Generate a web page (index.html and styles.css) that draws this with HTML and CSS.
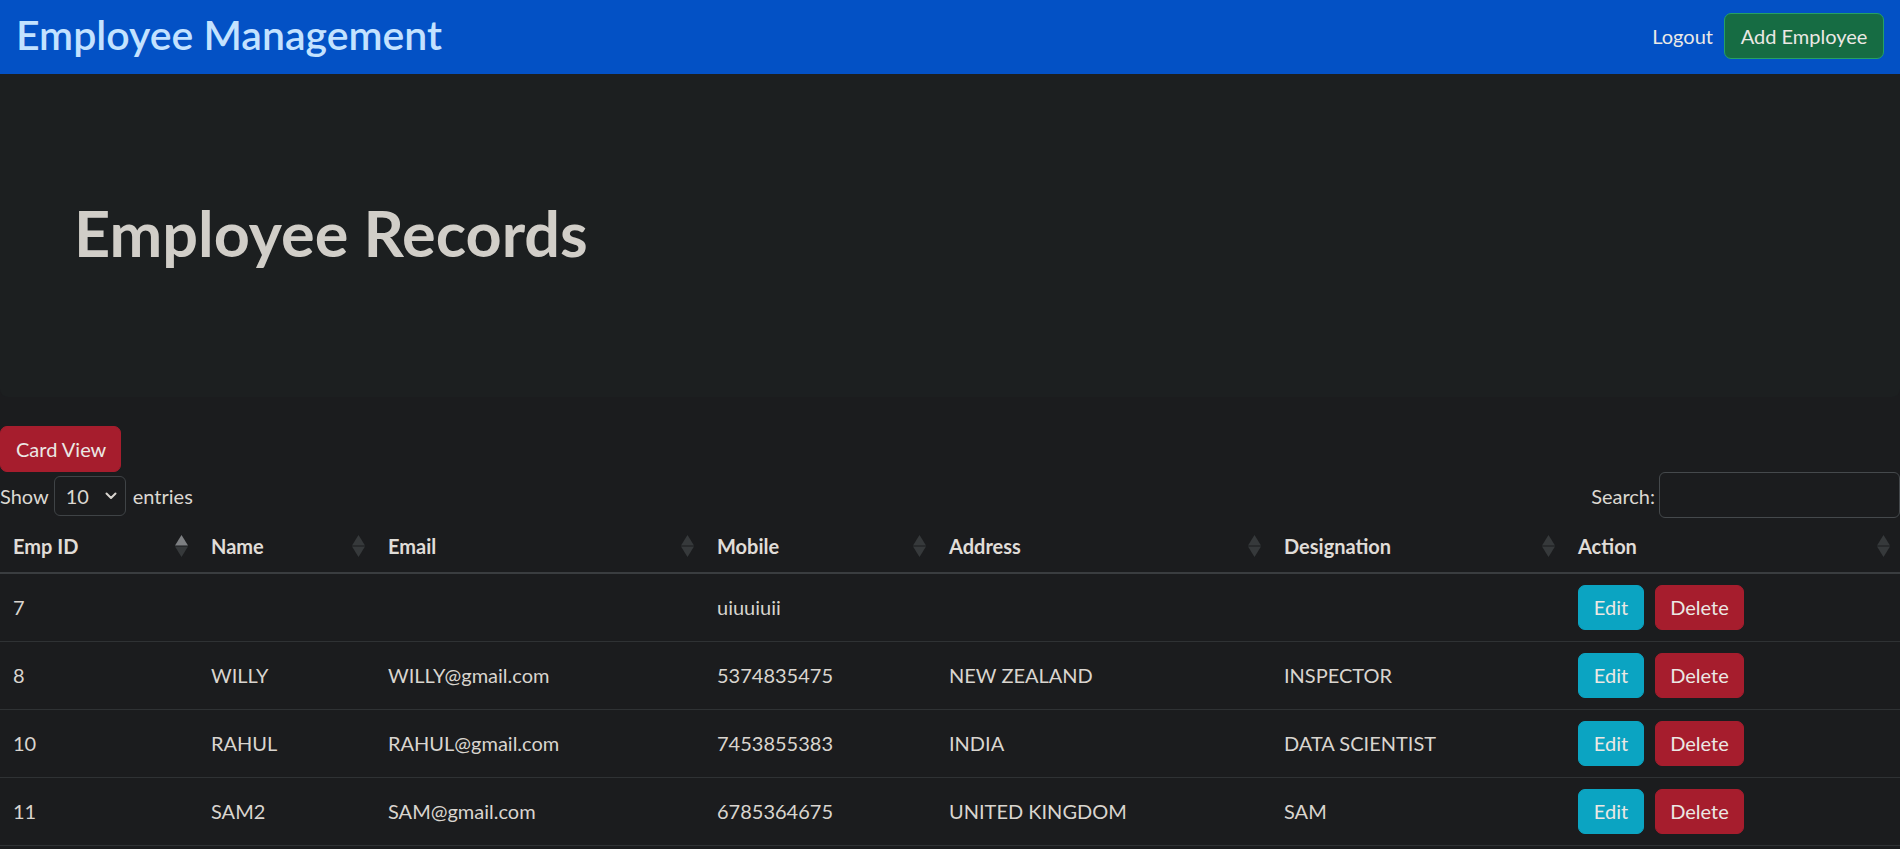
FILE: index.html
```html
<!DOCTYPE html>
<html lang="en">
<head>
<meta charset="utf-8">
<title>Employee Management</title>
<link rel="stylesheet" href="styles.css">
</head>
<body>
<nav class="navbar">
  <a class="brand" href="#">Employee Management</a>
  <div class="nav-right">
    <a class="nav-link" href="#">Logout</a>
    <button class="btn btn-success">Add Employee</button>
  </div>
</nav>

<section class="hero">
  <h1>Employee Records</h1>
</section>

<main class="content">
  <button class="btn btn-danger btn-card">Card View</button>

  <div class="dt-top">
    <label class="dt-length">Show
      <span class="select-wrap">
        <select class="dt-select"><option>10</option><option>25</option><option>50</option></select>
        <svg class="chev" width="12" height="8" viewBox="0 0 12 8"><path d="M1.5 1.5 L6 6 L10.5 1.5" fill="none" stroke="#d8d4cf" stroke-width="2" stroke-linecap="round" stroke-linejoin="round"/></svg>
      </span>
      entries</label>
    <label class="dt-search">Search:<input type="search" class="dt-input"></label>
  </div>

  <table class="dt-table">
    <colgroup>
      <col class="c-id"><col class="c-name"><col class="c-email"><col class="c-mobile"><col class="c-addr"><col class="c-desig"><col class="c-action">
    </colgroup>
    <thead>
      <tr>
        <th><div class="th-in"><span>Emp ID</span><svg class="sort" width="13" height="22" viewBox="0 0 13 22"><polygon class="up active" points="6.5,0 13,10.5 0,10.5"/><polygon class="down" points="0,11.5 13,11.5 6.5,22"/></svg></div></th>
        <th><div class="th-in"><span>Name</span><svg class="sort" width="13" height="22" viewBox="0 0 13 22"><polygon class="up" points="6.5,0 13,10.5 0,10.5"/><polygon class="down" points="0,11.5 13,11.5 6.5,22"/></svg></div></th>
        <th><div class="th-in"><span>Email</span><svg class="sort" width="13" height="22" viewBox="0 0 13 22"><polygon class="up" points="6.5,0 13,10.5 0,10.5"/><polygon class="down" points="0,11.5 13,11.5 6.5,22"/></svg></div></th>
        <th><div class="th-in"><span>Mobile</span><svg class="sort" width="13" height="22" viewBox="0 0 13 22"><polygon class="up" points="6.5,0 13,10.5 0,10.5"/><polygon class="down" points="0,11.5 13,11.5 6.5,22"/></svg></div></th>
        <th><div class="th-in"><span>Address</span><svg class="sort" width="13" height="22" viewBox="0 0 13 22"><polygon class="up" points="6.5,0 13,10.5 0,10.5"/><polygon class="down" points="0,11.5 13,11.5 6.5,22"/></svg></div></th>
        <th><div class="th-in"><span>Designation</span><svg class="sort" width="13" height="22" viewBox="0 0 13 22"><polygon class="up" points="6.5,0 13,10.5 0,10.5"/><polygon class="down" points="0,11.5 13,11.5 6.5,22"/></svg></div></th>
        <th><div class="th-in"><span>Action</span><svg class="sort" width="13" height="22" viewBox="0 0 13 22"><polygon class="up" points="6.5,0 13,10.5 0,10.5"/><polygon class="down" points="0,11.5 13,11.5 6.5,22"/></svg></div></th>
      </tr>
    </thead>
    <tbody>
      <tr>
        <td>7</td><td></td><td></td><td>uiuuiuii</td><td></td><td></td>
        <td><div class="actions"><button class="btn btn-info">Edit</button><button class="btn btn-danger">Delete</button></div></td>
      </tr>
      <tr>
        <td>8</td><td>WILLY</td><td>WILLY@gmail.com</td><td>5374835475</td><td>NEW ZEALAND</td><td>INSPECTOR</td>
        <td><div class="actions"><button class="btn btn-info">Edit</button><button class="btn btn-danger">Delete</button></div></td>
      </tr>
      <tr>
        <td>10</td><td>RAHUL</td><td>RAHUL@gmail.com</td><td>7453855383</td><td>INDIA</td><td>DATA SCIENTIST</td>
        <td><div class="actions"><button class="btn btn-info">Edit</button><button class="btn btn-danger">Delete</button></div></td>
      </tr>
      <tr>
        <td>11</td><td>SAM2</td><td>SAM@gmail.com</td><td>6785364675</td><td>UNITED KINGDOM</td><td>SAM</td>
        <td><div class="actions"><button class="btn btn-info">Edit</button><button class="btn btn-danger">Delete</button></div></td>
      </tr>
    </tbody>
  </table>
</main>
</body>
</html>
```

FILE: styles.css
```css
* { box-sizing: border-box; }

html, body {
  margin: 0;
  padding: 0;
  background: #1b1c1e;
  color: #dcd8d2;
  font-family: "Lato", "Liberation Sans", sans-serif;
  font-size: 20px;
  line-height: 1.5;
}

/* Navbar */
.navbar {
  height: 74px;
  background: #0351c5;
  display: flex;
  align-items: center;
  justify-content: space-between;
  padding: 0 16px 0 16px;
}
.brand {
  font-size: 41px;
  font-weight: 600;
  color: #c3e2ff;
  text-decoration: none;
  line-height: 1.2;
  margin-top: -4px;
}
.nav-right {
  display: flex;
  align-items: center;
  gap: 11px;
  margin-top: -2px;
}
.nav-link {
  color: #ebe9e6;
  text-decoration: none;
  font-size: 20px;
}

/* Buttons */
.btn {
  font-family: inherit;
  font-size: 20px;
  line-height: 1.5;
  color: #ebe8e4;
  border: 1px solid transparent;
  border-radius: 7px;
  padding: 0 15px;
  height: 46px;
  white-space: nowrap;
  cursor: pointer;
}
.btn-success {
  background: #166c43;
  border-color: #25a065;
  width: 160px;
}
.btn-danger {
  background: #a61d2d;
  border-color: #a61d2d;
}
.btn-info {
  background: #0ba4c2;
  border-color: #0ba4c2;
}

/* Hero */
.hero {
  height: 323px;
  background: #1c1f20;
  border-radius: 0 0 8px 8px;
  display: flex;
  align-items: center;
  padding-left: 74px;
}
.hero h1 {
  margin: -6px 0 0 0;
  font-size: 63px;
  font-weight: 700;
  color: #d1cec8;
  line-height: 1.2;
}

/* Content */
.content {
  padding-top: 29px;
}
.btn-card {
  height: 46px;
  display: block;
  padding: 0 15px;
  width: 121px;
}

.dt-top {
  height: 47px;
  display: flex;
  align-items: center;
  justify-content: space-between;
}
.dt-length {
  display: flex;
  align-items: center;
}
.select-wrap {
  position: relative;
  display: inline-block;
  margin: 0 7px 0 5px;
}
.dt-select {
  -webkit-appearance: none;
  appearance: none;
  width: 72px;
  height: 40px;
  background: #1b1c1e;
  color: #dcd8d2;
  border: 1px solid #3f4346;
  border-radius: 6px;
  font-family: inherit;
  font-size: 20px;
  padding: 0 0 0 11px;
}
.chev {
  position: absolute;
  right: 9px;
  top: 16px;
  pointer-events: none;
}
.dt-search {
  display: flex;
  align-items: center;
  gap: 4px;
}
.dt-input {
  width: 241px;
  height: 46px;
  background: #1b1c1e;
  border: 1px solid #45494c;
  border-radius: 6px;
  color: #dcd8d2;
  margin-top: -2px;
}

/* Table */
.dt-table {
  width: 100%;
  table-layout: fixed;
  border-collapse: collapse;
}
.c-id { width: 198px; }
.c-name { width: 177px; }
.c-email { width: 329px; }
.c-mobile { width: 232px; }
.c-addr { width: 335px; }
.c-desig { width: 294px; }
.c-action { width: 335px; }

.dt-table th {
  text-align: left;
  font-weight: 700;
  color: #e0ddd8;
  padding: 12px 10px 11px 13px;
  border-bottom: 2px solid #3a3d40;
  height: 54px;
}
.th-in {
  display: flex;
  align-items: center;
  justify-content: space-between;
}
.sort polygon { fill: #36393b; }
.sort polygon.active { fill: #7d7f82; }

.dt-table td {
  padding: 0 13px;
  height: 68px;
  border-bottom: 1px solid #2f3234;
  color: #d9d5cf;
  vertical-align: middle;
}
.actions {
  display: flex;
  gap: 11px;
}
.actions .btn {
  height: 45px;
  padding: 0;
}
.actions .btn-info { width: 66px; }
.actions .btn-danger { width: 89px; }
```
